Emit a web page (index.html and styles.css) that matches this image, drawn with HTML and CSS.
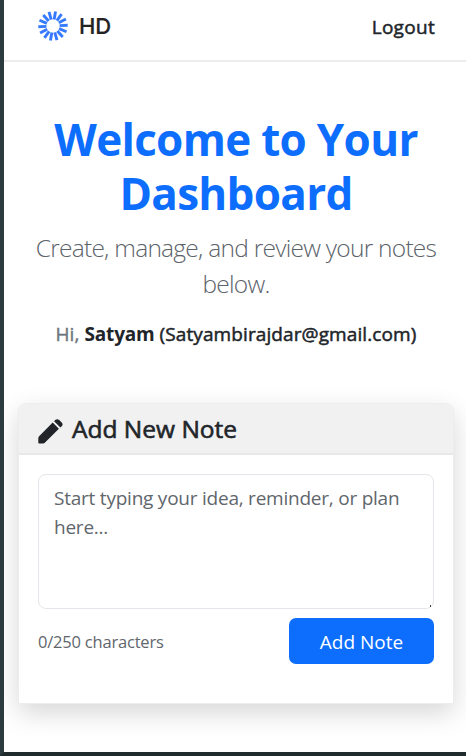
FILE: index.html
```html
<!DOCTYPE html>
<html lang="en">
<head>
<meta charset="utf-8">
<title>HD Notes</title>
<link rel="stylesheet" href="styles.css">
</head>
<body>
<div class="page">
  <header class="navbar">
    <div class="brand">
      <svg class="brand-mark" viewBox="-15 -15 30 30" aria-hidden="true">
        <g stroke="#367aff" stroke-width="2.9">
          <path id="ray" d="M0-6.6V-14.7" transform="rotate(10)"/>
          <use href="#ray" transform="rotate(25.7)"/>
          <use href="#ray" transform="rotate(51.4)"/>
          <use href="#ray" transform="rotate(77.1)"/>
          <use href="#ray" transform="rotate(102.9)"/>
          <use href="#ray" transform="rotate(128.6)"/>
          <use href="#ray" transform="rotate(154.3)"/>
          <use href="#ray" transform="rotate(180)"/>
          <use href="#ray" transform="rotate(205.7)"/>
          <use href="#ray" transform="rotate(231.4)"/>
          <use href="#ray" transform="rotate(257.1)"/>
          <use href="#ray" transform="rotate(282.9)"/>
          <use href="#ray" transform="rotate(308.6)"/>
          <use href="#ray" transform="rotate(334.3)"/>
        </g>
      </svg>
      <span class="brand-name">HD</span>
    </div>
    <a class="logout">Logout</a>
  </header>
  <main>
    <section class="hero">
      <h1>Welcome to Your<br>Dashboard</h1>
      <p class="lead">Create, manage, and review your notes<br>below.</p>
      <p class="greeting"><span class="hi">Hi,</span> <strong>Satyam</strong> <span class="email">(Satyambirajdar@gmail.com)</span></p>
    </section>
    <section class="card">
      <div class="card-header">
        <svg class="pencil" viewBox="0 0 25 25" aria-hidden="true">
          <path fill="#212529" d="M14.7 3.6 20.9 9.8 6.8 23.8Q6.1 24.5 5.1 24.5H1.2Q.3 24.5.3 23.6V19.2Q.3 18 1.1 17.2ZM16.1 2.2 17.2 1.1Q19.2-.7 21.2 1.1L23.7 3.6Q25.5 5.5 23.7 7.3L22.4 8.5Z"/>
        </svg>
        <h2>Add New Note</h2>
      </div>
      <div class="card-body">
        <div class="field">
          <textarea placeholder="Start typing your idea, reminder, or plan here..."></textarea>
          <i class="grip"></i>
        </div>
        <div class="actions">
          <small>0/250 characters</small>
          <button type="button">Add Note</button>
        </div>
      </div>
    </section>
  </main>
</div>
</body>
</html>
```
FILE: styles.css
```css
* { box-sizing: border-box; }
body {
  margin: 0;
  font-family: "Open Sans", "Noto Sans", sans-serif;
  color: #212529;
  background: #fff;
}
.page {
  height: 756px;
  overflow: hidden;
  border-left: 4px solid #2b3b3f;
  border-bottom: 4px solid #202b2d;
}
.navbar {
  height: 62px;
  padding: 0 31px 8px 34px;
  border-bottom: 2px solid #ececec;
  display: flex;
  align-items: center;
  justify-content: space-between;
}
.brand { display: flex; align-items: center; gap: 11px; }
.brand-mark { width: 30px; height: 30px; }
.brand-name { font: 500 22px/30px Inter, sans-serif; letter-spacing: -.2px; color: #232323; -webkit-text-stroke: .2px; }
.logout { padding-top: 2px; font-size: 19px; line-height: 30px; letter-spacing: .3px; -webkit-text-stroke: .5px; }
.hero { padding: 50px 0 0 2px; text-align: center; white-space: nowrap; }
h1, h2, p { margin: 0; }
h1 { font-size: 44px; line-height: 54px; font-weight: 700; color: #0d6efd; letter-spacing: -.7px; }
.lead { margin-top: 10px; font-size: 24.5px; line-height: 36px; font-weight: 300; color: #5c636a; letter-spacing: -.74px; }
.greeting { margin-top: 17px; font-size: 19px; line-height: 30px; letter-spacing: .1px; }
.greeting strong { letter-spacing: -.2px; }
.hi { color: #6c757d; -webkit-text-stroke: .4px; }
.email { -webkit-text-stroke: .5px; }
.card {
  margin: 54px 12px 0 14px;
  height: 301px;
  border: 1px solid #ededed;
  border-radius: 8px 8px 0 0;
  box-shadow: 0 9px 26px rgba(0, 0, 0, .16);
  background: #fff;
}
.card-header {
  height: 51px;
  padding: 0 19px;
  border-bottom: 2px solid #e8e8e8;
  border-radius: 7px 7px 0 0;
  background: #f1f1f1;
  display: flex;
  align-items: center;
  gap: 9px;
}
.pencil { width: 25px; height: 25px; margin-top: 5px; }
h2 { padding-top: 1px; font-size: 24.5px; line-height: 32px; font-weight: 400; letter-spacing: 0; -webkit-text-stroke: .6px; }
.card-body { padding: 19px 19px 0; }
.field { position: relative; height: 135px; }
textarea {
  display: block;
  width: 100%;
  height: 135px;
  padding: 9px 15px;
  border: 1px solid #e3e6ea;
  border-radius: 8px;
  resize: none;
  overflow: hidden;
  outline: 0;
  font: 400 19px/29px "Open Sans", "Noto Sans", sans-serif;
  letter-spacing: -.23px;
}
textarea::placeholder { color: #5f666c; opacity: 1; }
.grip { position: absolute; right: 3px; bottom: 2px; width: 1px; height: 2px; background: #444; }
.actions { margin-top: 9px; display: flex; align-items: center; justify-content: space-between; }
small { font-size: 16.5px; color: #5f666c; letter-spacing: -.2px; }
button {
  width: 145px;
  height: 46px;
  padding: 2px 0 0;
  border: 0;
  border-radius: 7px;
  background: #0d6efd;
  color: #fff;
  font: 400 19px/30px "Open Sans", "Noto Sans", sans-serif;
}
```
